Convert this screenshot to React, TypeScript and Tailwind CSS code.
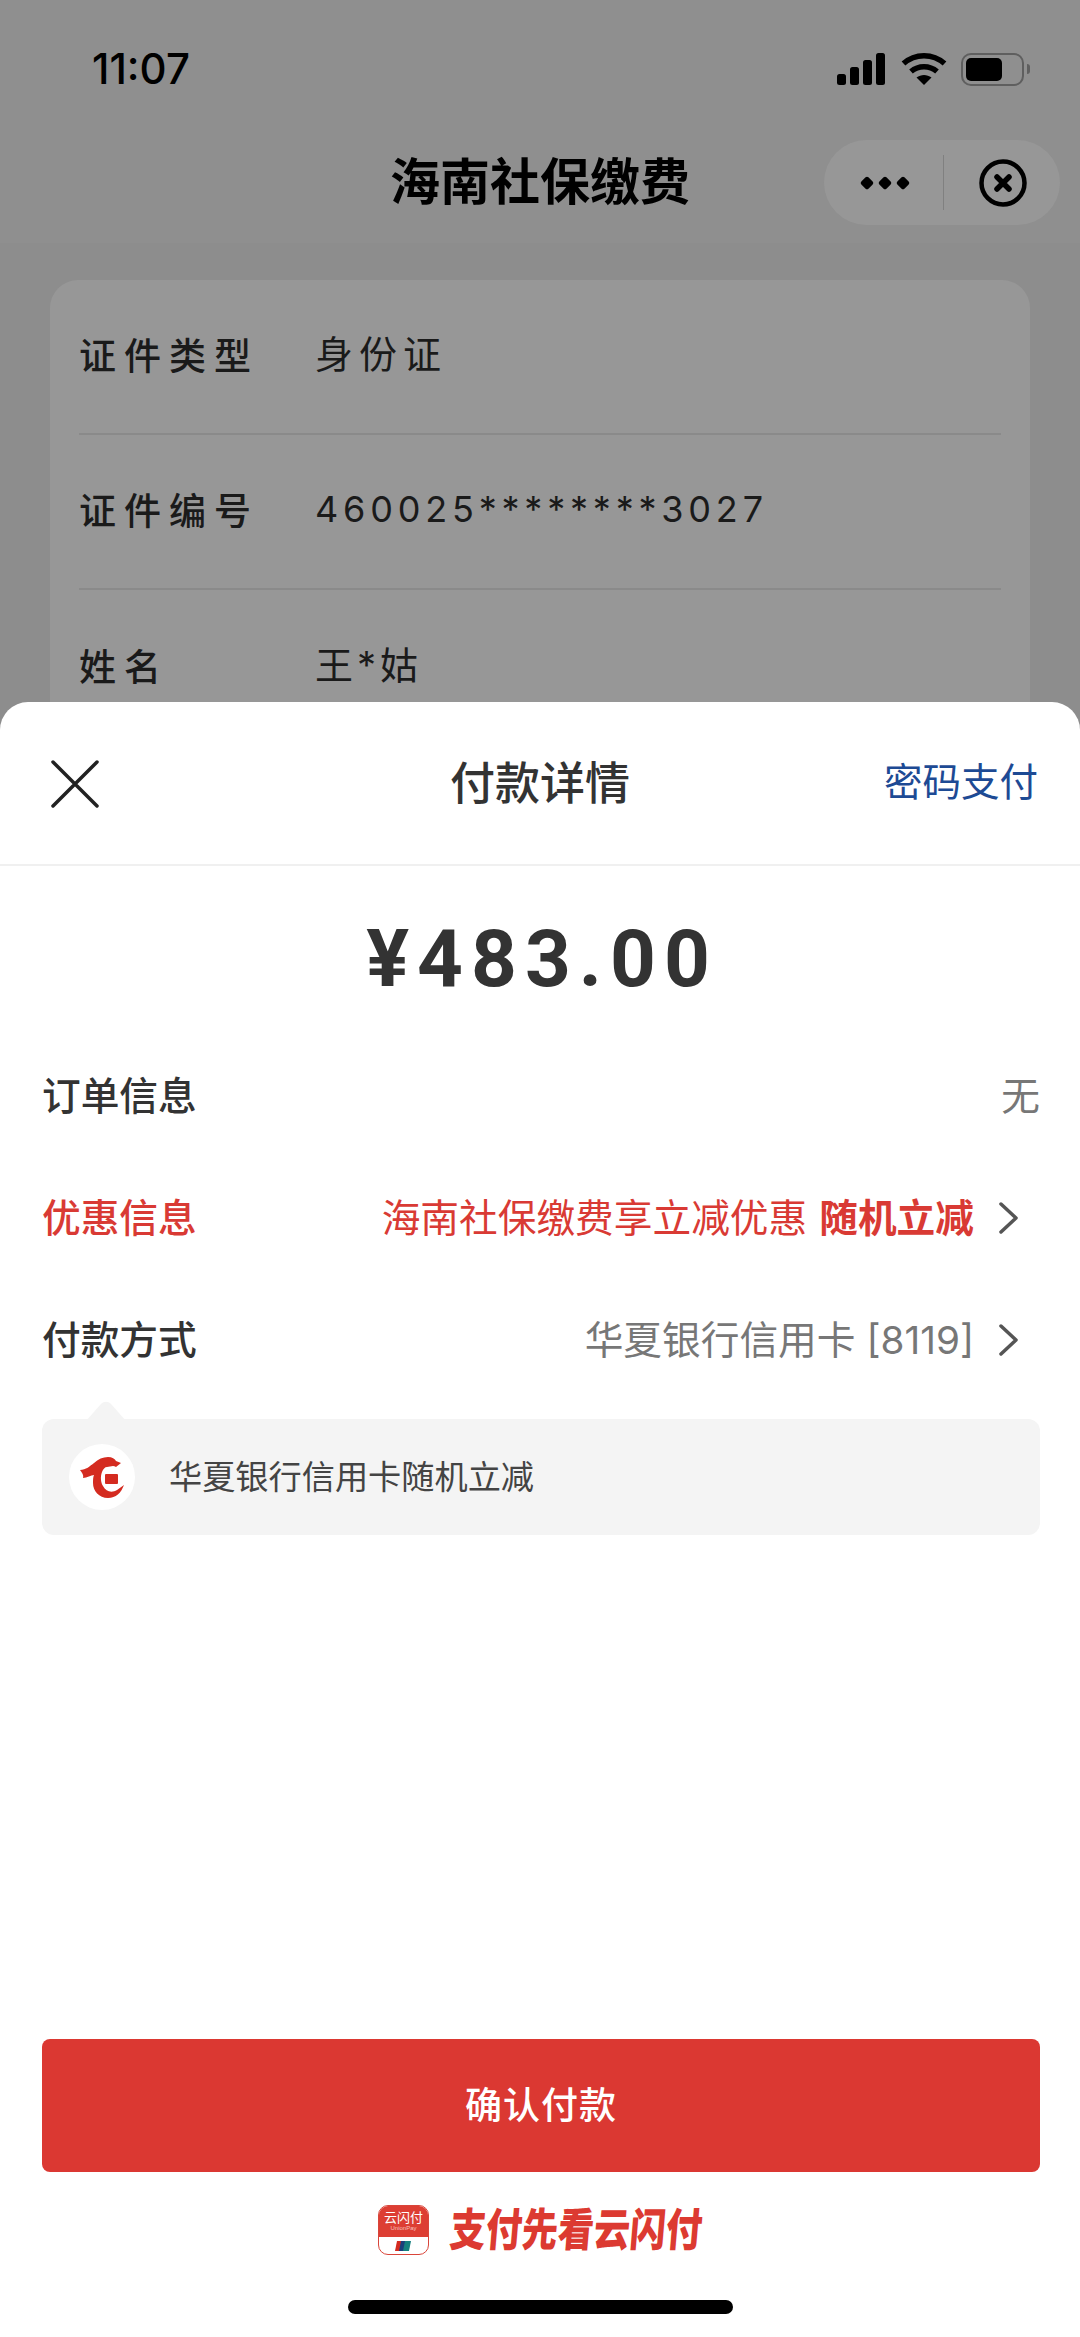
const CJK = "font-['Inter','Noto_Sans_CJK_SC',sans-serif]";

function StatusIcons() {
  return (
    <div className="flex items-center">
      <svg width="48" height="32" viewBox="0 0 48 32" fill="#000">
        <rect x="0" y="21" width="9" height="11" rx="2.5" />
        <rect x="13" y="14" width="9" height="18" rx="2.5" />
        <rect x="26" y="7" width="9" height="25" rx="2.5" />
        <rect x="39" y="0" width="9" height="32" rx="2.5" />
      </svg>
      <svg className="ml-[16px]" width="46" height="34" viewBox="0 0 46 34" fill="none" stroke="#000" strokeWidth="5.5">
        <path d="M2.5 11.5C14 1 32 1 43.5 11.5" />
        <path d="M10 19.5c7.500-6.500 18.500-6.500 26 0" />
        <path d="M23 33l-7.500-7.500c4.500-3.500 10.500-3.500 15 0z" fill="#000" stroke="none" />
      </svg>
      <div className="ml-[14px] flex items-center">
        <div className="flex h-[33px] w-[63px] items-center rounded-[10px] border-[2px] border-[#5f5f5f] p-[3px]">
          <div className="h-full w-[36px] rounded-[5px] bg-black" />
        </div>
        <div className="ml-[3px] h-[10px] w-[3px] rounded-r-full bg-[#5f5f5f]" />
      </div>
    </div>
  );
}

function Capsule() {
  return (
    <div className="flex h-[85px] w-[236px] items-center rounded-full bg-[#979797]">
      <div className="flex w-[119px] justify-center gap-[8px] pl-[2px]">
        {[0, 1, 2].map((i) => (
          <div key={i} className="size-[10px] rotate-45 rounded-[2px] bg-black" />
        ))}
      </div>
      <div className="h-[55px] w-px bg-[#808080]" />
      <div className="flex flex-1 justify-center pl-[2px]">
        <svg width="48" height="48" viewBox="0 0 48 48" fill="none" stroke="#000">
          <circle cx="24" cy="24" r="21.500" strokeWidth="4.500" />
          <path d="M18 18l12 12M30 18L18 30" strokeWidth="5.500" strokeLinecap="round" />
        </svg>
      </div>
    </div>
  );
}

function InfoRow({ label, value, valueClass, last }: { label: string; value: string; valueClass: string; last?: boolean }) {
  return (
    <div className={`flex h-[155px] items-center ${last ? "" : "border-b-2 border-[#8a8a8a]"}`}>
      <span className="w-[236px] text-[37px] font-medium tracking-[8px] text-[#1a1a1a]">{label}</span>
      <span className={`-mt-[5px] text-[#1a1a1a] ${valueClass}`}>{value}</span>
    </div>
  );
}

function Chevron() {
  return (
    <svg className="ml-[24px] mr-[20px]" width="22" height="34" viewBox="0 0 22 34" fill="none" stroke="#555" strokeWidth="3.500" strokeLinecap="round" strokeLinejoin="round">
      <path d="M3 3l15 14L3 31" />
    </svg>
  );
}

function HuaxiaLogo() {
  return (
    <div className="flex size-[66px] shrink-0 items-center justify-center rounded-full bg-white">
      <svg width="44" height="41" viewBox="0 0 44 41" fill="#d42b20">
        <path d="M0 13C6 13 10 9 14 6C18 2 23 0 28 0C32 0 35 2 36 4L41 6L36 10C33 8 30 10 27 10C25 10 23 12 22 15C20 20 21 26 23 29C26 35 32 36 37 33L44 28C41 36 36 41 28 41C19 41 13 34 13 26C13 23 13 20 14 18C11 18 7 21 3 21C4 18 2 16 0 13Z" />
        <rect x="25" y="17" width="13" height="10" rx="1" />
      </svg>
    </div>
  );
}

function AppIcon() {
  return (
    <div className="flex h-[50px] w-[51px] flex-col overflow-hidden rounded-[10px] border border-[#d9453a] bg-white">
      <div className="flex h-[31px] flex-col items-center bg-[#dd3e33] pt-[4px]">
        <span className="text-[13px] leading-[14px] text-white">云闪付</span>
        <span className="font-['Liberation_Sans'] text-[6px] leading-[8px] text-[#f5c2bd]">UnionPay</span>
      </div>
      <div className="flex flex-1 items-center justify-center">
        <svg width="16" height="10" viewBox="0 0 16 10">
          <path d="M2 0h5L5 10H0z" fill="#d42b20" />
          <path d="M6 0h5L9 10H4z" fill="#1c3f7c" />
          <path d="M10 0h6l-2 10H8z" fill="#17807e" />
        </svg>
      </div>
    </div>
  );
}

export default function App() {
  return (
    <div className={`relative flex h-[2337px] w-[1080px] flex-col overflow-hidden bg-[#8d8d8d] ${CJK}`}>
      <div className="h-[243px] bg-[#8f8f8f]">
        <div className="flex items-center justify-between pl-[92px] pr-[50px] pt-[46px]">
          <span className="text-[42px] font-medium leading-[46px] text-black">11:07</span>
          <StatusIcons />
        </div>
        <div className="relative mt-[48px] flex h-[85px] items-center justify-center">
          <span className="text-[50px] font-bold text-black">海南社保缴费</span>
          <div className="absolute right-[20px] top-0">
            <Capsule />
          </div>
        </div>
      </div>

      <div className="mx-[50px] mt-[37px] rounded-[28px] bg-[#979797] px-[29px]">
        <InfoRow label="证件类型" value="身份证" valueClass="text-[38px] tracking-[6px]" />
        <InfoRow label="证件编号" value="460025********3027" valueClass="text-[36px] tracking-[4.800px]" />
        <InfoRow label="姓名" value="王*姑" valueClass="text-[38px] tracking-[4px]" last />
      </div>

      <div className="absolute inset-x-0 top-[702px] bottom-0 flex flex-col rounded-t-[28px] bg-white">
        <div className="relative flex h-[164px] items-center justify-center border-b-2 border-[#f0f0f0]">
          <svg className="absolute left-[51px] top-[58px]" width="48" height="48" viewBox="0 0 48 48" fill="none" stroke="#222" strokeWidth="3.500" strokeLinecap="round">
            <path d="M2 2l44 44M46 2L2 46" />
          </svg>
          <span className="pt-[2px] text-[45px] font-medium text-[#333]">付款详情</span>
          <span className="absolute right-[42px] text-[38.500px] text-[#1d4a94]">密码支付</span>
        </div>

        <div className="mt-[46px] pl-[4px] text-center font-['Roboto','Liberation_Sans',sans-serif] text-[80px] font-bold leading-[94px] tracking-[8px] text-[#333]">¥483.00</div>

        <div className="mt-[29px] pl-[42px] pr-[40px]">
          <div className="flex h-[122px] items-center justify-between text-[38.700px]">
            <span className="font-medium text-[#333]">订单信息</span>
            <span className="text-[#777]">无</span>
          </div>
          <div className="flex h-[122px] items-center justify-between text-[38.700px] text-[#d93a34]">
            <span className="font-medium">优惠信息</span>
            <div className="flex items-center">
              <span>海南社保缴费享立减优惠</span>
              <span className="ml-[12px] font-bold">随机立减</span>
              <Chevron />
            </div>
          </div>
          <div className="flex h-[122px] items-center justify-between text-[38.700px]">
            <span className="font-medium text-[#333]">付款方式</span>
            <div className="flex items-center text-[#777]">
              <span>华夏银行信用卡 [8119]</span>
              <Chevron />
            </div>
          </div>

          <div className="relative mt-[18px] flex h-[116px] items-center rounded-[12px] bg-[#f4f4f4] pl-[27px]">
            <svg className="absolute -top-[18px] left-[44px]" width="40" height="20" viewBox="0 0 40 20">
              <path d="M0 20L15 3c3-3 7-3 10 0l15 17z" fill="#f4f4f4" />
            </svg>
            <HuaxiaLogo />
            <span className="ml-[34px] pt-[2px] text-[33.200px] text-[#444]">华夏银行信用卡随机立减</span>
          </div>
        </div>

        <div className="ml-[42px] mr-[40px] mt-auto flex h-[133px] items-center justify-center rounded-[8px] bg-[#db3832] text-[37px] font-medium tracking-[1px] text-white">确认付款</div>

        <div className="mt-[33px] flex items-center justify-center gap-[21px]">
          <AppIcon />
          <span className="-skew-x-6 scale-y-[1.25] text-[36px] font-black leading-[50px] text-[#dc3a31]">支付先看云闪付</span>
        </div>

        <div className="mx-auto mb-[23px] mt-[45px] h-[14px] w-[385px] rounded-full bg-black" />
      </div>
    </div>
  );
}
